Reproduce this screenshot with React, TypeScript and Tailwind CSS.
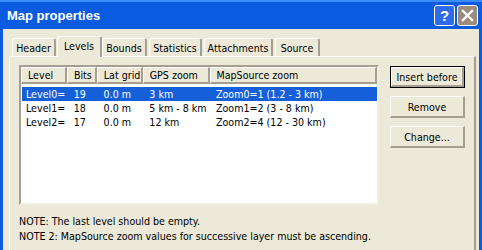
import React from 'react';

const tabs = [
  { label: 'Header', w: 'w-[44px]', ml: 'ml-0' },
  { label: 'Levels', w: 'w-[45px]', ml: 'ml-[1px]', active: true },
  { label: 'Bounds', w: 'w-[45px]', ml: 'ml-0' },
  { label: 'Statistics', w: 'w-[53px]', ml: 'ml-[2px]' },
  { label: 'Attachments', w: 'w-[69px]', ml: 'ml-[2px]' },
  { label: 'Source', w: 'w-[45px]', ml: 'ml-[2px]' },
];

const columns = [
  { label: 'Level', w: 'w-[46px]' },
  { label: 'Bits', w: 'w-[30px]' },
  { label: 'Lat grid', w: 'w-[46px]' },
  { label: 'GPS zoom', w: 'w-[67px]' },
  { label: 'MapSource zoom', w: 'w-[168px]' },
];

const rows = [
  ['Level0=', '19', '0.0 m', '3 km', 'Zoom0=1 (1.2 - 3 km)'],
  ['Level1=', '18', '0.0 m', '5 km - 8 km', 'Zoom1=2 (3 - 8 km)'],
  ['Level2=', '17', '0.0 m', '12 km', 'Zoom2=4 (12 - 30 km)'],
];

const Button: React.FC<{ label: string; isDefault?: boolean }> = ({ label, isDefault }) => (
  <div
    className={`w-[75px] h-[22px] ${isDefault ? 'border border-black' : ''}`}
  >
    <div className="w-full h-full bg-[#ece9d8] border-t border-l border-white border-r-2 border-b-2 border-r-[#a69e90] border-b-[#a69e90] flex items-center justify-center text-black">
      {label}
    </div>
  </div>
);

export default function App() {
  return (
    <div className="w-[482px] h-[250px] overflow-hidden bg-[#0a5be0] flex flex-col font-['DejaVu_Sans_Condensed','Liberation_Sans',sans-serif] text-[10.6px] leading-[14px] text-black">
      {/* title bar */}
      <div className="h-[29px] shrink-0 flex items-center pl-[7px] pr-[4px] border-t-2 border-[#3b8cff]">
        <span className="text-white font-bold text-[13px] font-['Liberation_Sans',sans-serif]">
          Map properties
        </span>
        <div className="ml-auto flex gap-[2px]">
          <div className="w-[21px] h-[21px] rounded-[3px] border border-white bg-[#2c6cea] flex items-center justify-center text-white font-bold text-[15px] font-['Liberation_Sans',sans-serif]">
            ?
          </div>
          <div className="w-[21px] h-[21px] rounded-[3px] border border-white bg-[#9b8c7d] flex items-center justify-center">
            <svg width="13" height="13" viewBox="0 0 13 13">
              <path d="M2 2 L11 11 M11 2 L2 11" stroke="white" strokeWidth="2.4" strokeLinecap="square" />
            </svg>
          </div>
        </div>
      </div>

      {/* body */}
      <div className="flex-1 mx-[3px] bg-[#ece9d8] flex flex-col pl-[6px] pr-[3px]">
        <div className="h-[27px] flex items-end pl-[3px] shrink-0">
          {tabs.map(t => (
            <div
              key={t.label}
              className={`${t.w} ${t.ml} flex justify-center bg-[#ece9d8] border-t border-l border-white border-r-2 border-r-[#a69e90] rounded-t-[3px] whitespace-nowrap ${
                t.active ? 'h-[21px] -mb-px relative z-10 pt-[2px]' : 'h-[18px] pt-[2px]'
              }`}
            >
              {t.label}
            </div>
          ))}
        </div>

        <div className="flex-1 border-t border-l border-white border-r-2 border-r-[#a69e90] pl-[9px] pt-[8px]">
          <div className="flex">
            <div className="w-[360px] h-[140px] bg-white border-2 border-t-[#a69e90] border-l-[#a69e90] border-r-[#f1efe2] border-b-[#f1efe2]">
              <div className="flex h-[17px]">
                {columns.map(c => (
                  <div
                    key={c.label}
                    className={`${c.w} bg-[#ece9d8] border-t border-l border-white border-r-2 border-b-2 border-r-[#a69e90] border-b-[#a69e90] pl-[6px] flex items-center whitespace-nowrap overflow-hidden`}
                  >
                    {c.label}
                  </div>
                ))}
              </div>
              <div className="pt-[3px]">
                {rows.map((r, i) => (
                  <div
                    key={r[0]}
                    className={`flex h-[14px] items-center ml-[1px] ${i === 0 ? 'bg-[#1560d8] text-white' : ''}`}
                  >
                    {r.map((cell, j) => (
                      <div key={j} className={`${columns[j].w} ${j === 0 ? 'pl-[4px] w-[45px]' : 'pl-[6px]'} whitespace-nowrap`}>
                        {cell}
                      </div>
                    ))}
                  </div>
                ))}
              </div>
            </div>

            <div className="ml-[11px] flex flex-col gap-[8px] pt-[1px]">
              <Button label="Insert before" isDefault />
              <Button label="Remove" />
              <Button label="Change..." />
            </div>
          </div>

          <div className="mt-[9px] leading-[15px]">
            <div>NOTE: The last level should be empty.</div>
            <div>NOTE 2: MapSource zoom values for successive layer must be ascending.</div>
          </div>
        </div>
      </div>
    </div>
  );
}
